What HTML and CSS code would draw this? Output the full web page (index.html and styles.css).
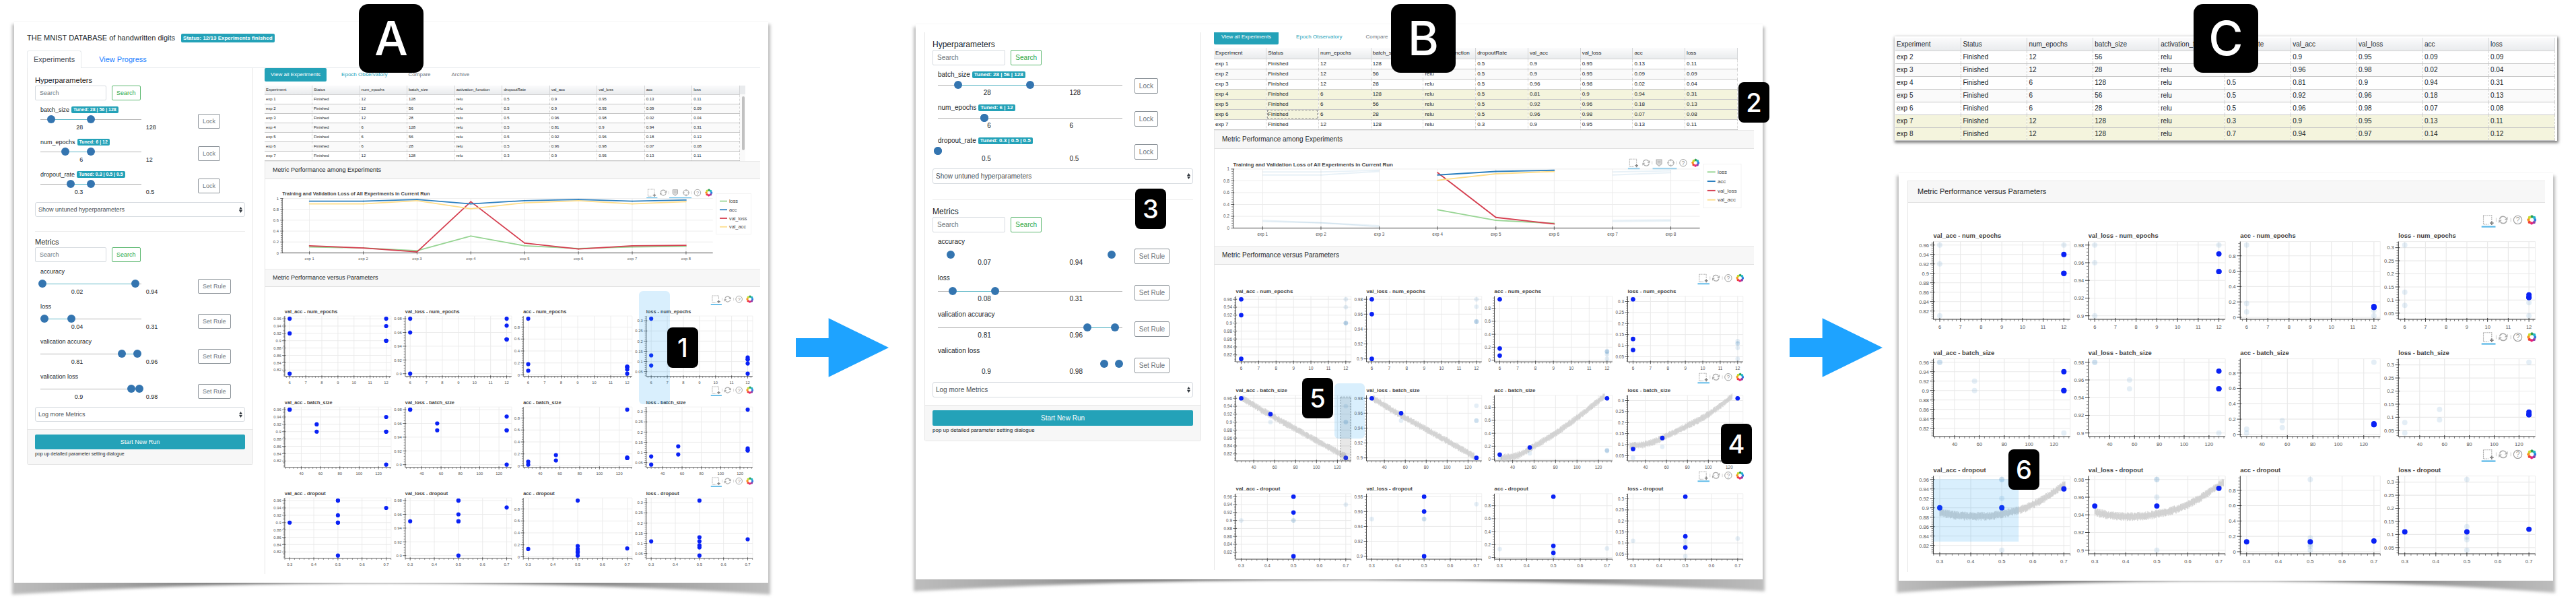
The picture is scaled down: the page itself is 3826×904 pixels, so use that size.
FILE: index.html
```html
<!DOCTYPE html>
<html lang="en">
<head>
<meta charset="utf-8">
<title>MNIST experiment dashboard</title>
<link rel="stylesheet" href="styles.css">
</head>
<body>
<main class="figure">

  <section class="panel panel-a">
    <svg class="shadow" viewBox="0 0 100 100" preserveAspectRatio="none" aria-hidden="true">
      <defs>
        <linearGradient id="lift" x1="0" x2="1" y1="0" y2="0">
          <stop offset="0" stop-color="#bdbdbd"/><stop offset="0.15" stop-color="#a0a0a0"/>
          <stop offset="0.4" stop-color="#4a4a4a"/><stop offset="0.6" stop-color="#4a4a4a"/>
          <stop offset="0.85" stop-color="#a0a0a0"/><stop offset="1" stop-color="#bdbdbd"/>
        </linearGradient>
      </defs>
      <path d="M0 0H100V100Q50 95.8 0 100Z" fill="url(#lift)"/>
    </svg>
    <div class="sheet">
      <header class="title-row">
        <h1 class="title">THE MNIST DATABASE of handwritten digits</h1>
        <span class="badge badge-status">Status: 12/13 Experiments finished</span>
      </header>
      <nav class="page-tabs">
        <a class="page-tab page-tab-active" href="#experiments">Experiments</a>
        <a class="page-tab" href="#progress">View Progress</a>
      </nav>
      <div class="columns">
        <aside class="sidebar" data-sidebar="a"></aside>
        <div class="content">
          <nav class="view-tabs">
            <button class="view-tab view-tab-active" type="button">View all Experiments</button>
            <button class="view-tab view-tab-link" type="button">Epoch Observatory</button>
            <button class="view-tab" type="button">Compare</button>
            <button class="view-tab" type="button">Archive</button>
          </nav>
          <div class="table-wrap">
            <table class="runs" data-rows="1,2,3,4,5,6,7"></table>
            <div class="scrollbar"><div class="scroll-thumb"></div></div>
          </div>
          <section class="card">
            <h2 class="card-title">Metric Performance among Experiments</h2>
            <div class="card-body"><div data-lines=""></div></div>
          </section>
          <section class="card">
            <h2 class="card-title">Metric Performance versus Parameters</h2>
            <div class="card-body card-body-grid"><div data-scatter=""></div></div>
          </section>
        </div>
      </div>
    </div>
    <div class="region region-a"></div>
    <div class="mark mark-large mark-a">A</div>
    <div class="mark mark-1">1</div>
  </section>

  <svg class="arrow" viewBox="0 0 139 88" aria-hidden="true"><path d="M0 30H49V0L139 44L49 88V58H0Z"/></svg>

  <section class="panel panel-b">
    <svg class="shadow" viewBox="0 0 100 100" preserveAspectRatio="none" aria-hidden="true">
      <path d="M0 0H100V100Q50 95.8 0 100Z" fill="url(#lift)"/>
    </svg>
    <div class="sheet">
      <div class="columns">
        <aside class="sidebar" data-sidebar="b"></aside>
        <div class="content">
          <nav class="view-tabs">
            <button class="view-tab view-tab-active" type="button">View all Experiments</button>
            <button class="view-tab view-tab-link" type="button">Epoch Observatory</button>
            <button class="view-tab" type="button">Compare</button>
          </nav>
          <div class="table-wrap">
            <table class="runs" data-rows="1,2,3,4,5,6,7" data-picked="4,5,6" data-focus="6"></table>
          </div>
          <section class="card">
            <h2 class="card-title">Metric Performance among Experiments</h2>
            <div class="card-body"><div data-lines="4,5,6"></div></div>
          </section>
          <section class="card">
            <h2 class="card-title">Metric Performance versus Parameters</h2>
            <div class="card-body card-body-grid"><div data-scatter="4,5,6" data-fit="batch"></div></div>
          </section>
        </div>
      </div>
    </div>
    <div class="region region-b"></div>
    <div class="mark mark-large mark-b">B</div>
    <div class="mark mark-2">2</div>
    <div class="mark mark-3">3</div>
    <div class="mark mark-4">4</div>
    <div class="mark mark-5">5</div>
  </section>

  <svg class="arrow arrow-late" viewBox="0 0 139 88" aria-hidden="true"><path d="M0 30H49V0L139 44L49 88V58H0Z"/></svg>

  <div class="panel-stack">
    <div class="table-sheet">
      <table class="runs" data-rows="2,3,4,5,6,7,8" data-picked="7,8"></table>
    </div>
    <section class="panel panel-c">
      <svg class="shadow" viewBox="0 0 100 100" preserveAspectRatio="none" aria-hidden="true">
        <path d="M0 0H100V100Q50 94 0 100Z" fill="url(#lift)"/>
      </svg>
      <div class="sheet">
        <section class="card">
          <h2 class="card-title">Metric Performance versus Parameters</h2>
          <div class="card-body card-body-grid"><div data-scatter="1,7,8" data-fit="dropout"></div></div>
        </section>
      </div>
      <div class="mark mark-6">6</div>
    </section>
    <div class="mark mark-large mark-c">C</div>
  </div>

</main>
<script src="app.js"></script>
</body>
</html>
```
FILE: styles.css
```css
* { box-sizing: border-box; }

body {
  margin: 0;
  min-height: 100vh;
  background: #fff;
  color: #212529;
  font-family: "Liberation Sans", Arial, sans-serif;
}

button, input, select { font-family: inherit; margin: 0; }

.figure {
  display: grid;
  grid-template-columns: 1120fr 219fr 1258fr 196fr 984fr;
  align-items: start;
  padding: 0 28px 30px 21px;
}

/* Sheets and their lifted shadows */
.panel { position: relative; isolation: isolate; min-width: 0; }
.sheet { position: relative; background: #fff; border-top: 1px solid #f6f6f6; }
.shadow {
  position: absolute;
  left: -3px;
  top: 5px;
  width: calc(100% + 6px);
  height: calc(100% + 13px);
  filter: blur(2px);
}

.panel-a {
  --text: 9px; --heading: 11px; --card-title: 9px; --small: 7px; --badge: 7px; --tab: 8px; --cell: 6px;
  --field: 22px; --row: 48px; --metric-row: 52px; --line: 12px;
  --track: 64%; --first: 27%; --second: 40%;
  margin-top: 31px;
}
.panel-a .sheet { padding: 15px 12px 13px 19px; }
.panel-a .columns { grid-template-columns: minmax(0, 336fr) minmax(0, 736fr); gap: 17px; }

.panel-b {
  --text: 10px; --heading: 12px; --card-title: 10px; --small: 8px; --badge: 8px; --tab: 8px; --cell: 8px;
  --field: 23px; --row: 49px; --metric-row: 54px; --line: 14px;
  --track: 94%; --first: 27%; --second: 40%;
  margin-top: 35px;
}
.panel-b .sheet { padding: 12px 13px 14px; }
.panel-b .columns { grid-template-columns: minmax(0, 411fr) minmax(0, 802fr); gap: 19px; }

.panel-stack { position: relative; --cell: 10px; --card-title: 11px; padding-top: 54px; }
.panel-c { margin: 47px 6px 0; }
.panel-c .sheet { padding: 11px 12px 13px 13px; }

.arrow { width: 138px; height: 88px; margin-top: 472px; justify-self: center; }
.arrow-late { justify-self: end; margin-right: 18px; }
.arrow path { fill: #1ea3ff; }

/* Page head */
.title-row { display: flex; align-items: center; gap: 9px; height: 18px; }
.title { margin: 0; font-size: 11px; font-weight: 400; }
.badge {
  background: #24a2b8;
  color: #fff;
  font-weight: 700;
  font-size: var(--badge);
  line-height: 10px;
  padding: 0 3px;
  border-radius: 2px;
  white-space: nowrap;
}
.badge-status { font-size: 8px; line-height: 13px; }
.page-tabs { display: flex; gap: 16px; margin-top: 10px; border-bottom: 1px solid #e9ecef; }
.page-tab {
  font-size: 11px;
  line-height: 24px;
  padding: 0 9px;
  color: #1a7dff;
  text-decoration: none;
  border: 1px solid transparent;
  border-bottom: 0;
}
.page-tab-active {
  color: #495057;
  background: #fff;
  border-color: #e6e9ec;
  border-radius: 3px 3px 0 0;
  margin-bottom: -1px;
}
.columns { display: grid; align-items: start; }

/* Sidebar */
.sidebar { border: 1px solid #e6e6e6; border-top: 0; border-radius: 0 0 3px 3px; }
.side-body { padding: 10px 11px 11px; }
.side-title { margin: 0; font-size: var(--heading); font-weight: 400; line-height: 16px; }
.search { display: flex; gap: 8px; margin-bottom: 8px; }
.panel-b .search { margin-bottom: 7px; }
.field, .button, .select {
  height: var(--field);
  font-size: var(--text);
  border-radius: 2px;
  background: #fff;
}
.field { width: 34%; border: 1px solid #d6dbe0; padding: 0 6px; color: #495057; }
.panel-b .field { width: 28%; }
.field::placeholder { color: #6c757d; opacity: 1; }
.button { border: 1px solid #8d949a; color: #6c757d; padding: 0 6px; white-space: nowrap; }
.button-search { border-color: #5cb870; color: #28a745; }
.param { display: flex; align-items: flex-start; height: var(--row); padding-left: 8px; }
.param-metric { height: var(--metric-row); }
.param-main { flex: 0 0 77%; }
.param-label { display: flex; align-items: center; gap: 3px; height: var(--line); font-size: var(--text); line-height: var(--line); }
.param .button { margin-top: 12px; }
.param-metric .button { margin-top: 17px; }
.slider { display: grid; align-items: center; position: relative; width: var(--track); height: 12px; margin-top: 2px; }
.param-metric .slider { margin-top: 6px; }
.slider > * { grid-area: 1 / 1; }
.slider-track { height: 1px; background: #b4b4b4; }
.slider-fill {
  height: 1px;
  background: #5bb5c5;
  margin-left: calc(var(--lo) * 1%);
  width: calc((var(--hi) - var(--lo)) * 1%);
}
.slider input {
  appearance: none;
  background: none;
  width: calc(100% + 12px);
  height: 12px;
  margin: 0 -6px;
  pointer-events: none;
}
.slider input::-webkit-slider-thumb {
  appearance: none;
  width: 12px;
  height: 12px;
  border: 0;
  border-radius: 50%;
  background: #3475b0;
  pointer-events: auto;
}
.values { display: flex; font-size: var(--text); line-height: 12px; }
.value-first { width: var(--first); text-align: right; }
.value-second { margin-left: var(--second); }
.select-wrap { position: relative; margin-top: -1px; }
.select {
  display: block;
  width: 100%;
  appearance: none;
  border: 1px solid #d6dbe0;
  border-radius: 3px;
  padding: 0 4px;
  color: #495057;
}
.select-arrows { position: absolute; right: 4px; top: 7px; width: 5px; height: 9px; fill: #343a40; }
.rule { border: 0; border-top: 1px solid #ececec; margin: 21px 0 7px; }
.panel-b .rule { margin: 23px 0 9px; }
.side-foot { background: #f7f7f7; border-top: 1px solid #e6e6e6; padding: 7px 11px 8px; }
.run {
  display: block;
  width: 100%;
  height: var(--field);
  border: 0;
  border-radius: 2px;
  background: #24a2b8;
  color: #fff;
  font-size: var(--text);
}
.hint { margin: 0; font-size: var(--small); line-height: 14px; }

/* Views */
.view-tabs { display: flex; gap: 13px; margin-bottom: 6px; }
.view-tab {
  border: 0;
  border-radius: 2px;
  background: none;
  color: #6c757d;
  font-size: var(--tab);
  line-height: 20px;
  height: 20px;
  padding: 0 9px;
}
.view-tab-link { color: #24a2b8; }
.view-tab-active { background: #24a2b8; color: #fff; }
.panel-b .view-tabs { height: 18px; gap: 17px; align-items: flex-end; margin-bottom: 5px; }
.panel-b .view-tab { height: 18px; line-height: 14px; padding-bottom: 4px; }
.panel-b .view-tab-active { border-radius: 0 0 2px 2px; padding-left: 11px; padding-right: 11px; }

/* Runs table */
.table-wrap { display: flex; width: 97%; }
.runs { flex: 1; width: 100%; border-collapse: collapse; table-layout: fixed; font-size: var(--cell); }
.runs th, .runs td { text-align: left; padding: 0 2px; font-weight: 400; overflow: hidden; white-space: nowrap; }
.runs th { height: 13px; background: linear-gradient(#fbfbfc, #e9ebed); border-right: 1px solid #d4d6d8; border-bottom: 1px solid #d0d0d0; }
.runs td { height: 14px; border-right: 1px dotted #cfcfcf; border-bottom: 1px solid #c6c6c6; }
.runs tr:nth-child(even) td { background: #fafafa; }
.runs tr.picked td { background: #f4f4dd; }
.runs td.focus { outline: 1px dashed #999; outline-offset: -2px; }
.scrollbar { width: 8px; padding: 16px 1px 0 3px; background: linear-gradient(#e9ebed 13px, #fafafa 13px); }
.scroll-thumb { width: 4px; height: 80px; border-radius: 2px; background: #c1c1c1; }
.panel-b .runs th { height: 16px; }
.panel-b .runs td { height: 15px; }
.table-sheet {
  padding: 2px 3px 1px 1px;
  background: #fff;
  box-shadow: 1px 2px 4px 1px rgba(0, 0, 0, 0.5);
  height: 155px;
}
.table-sheet .runs th { height: 19px; }
.table-sheet .runs td { height: 19px; border-right-style: dashed; }

/* Cards */
.card { border-left: 1px solid #e6e6e6; }
.card-title {
  margin: 0;
  padding: 0 11px;
  background: #f7f7f7;
  border-top: 1px solid #e9e9e9;
  border-bottom: 1px solid #e0e0e0;
  font-size: var(--card-title);
  line-height: 26px;
  font-weight: 400;
}
.panel-a .card-title { line-height: 25px; }
.panel-a .card-body { padding: 12px 10px 11px 9px; }
.panel-a .card-body-grid { padding: 10px 10px 10px 9px; }
.panel-b .card-body { padding: 12px 15px 13px 10px; }
.panel-b .card-body-grid { padding: 11px 15px 2px 10px; }
.panel-c .card-title { line-height: 31px; padding: 0 14px; }
.panel-c .card-body-grid { padding: 15px 13px 11px 12px; }
.chart { display: block; width: 100%; height: auto; }
.chart text { font-size: 8px; fill: #555; }
.chart .chart-title { font-size: 10px; font-weight: 700; fill: #444; }
.chart .legend-text { font-size: 10px; fill: #444; }
.chart .tool-text { font-size: 11px; fill: #999; }

/* Call-outs lying over the sheets */
.mark {
  position: absolute;
  display: grid;
  place-items: center;
  width: 46px;
  height: 60px;
  border-radius: 8px;
  background: #000;
  color: #fff;
  font: 500 38px/60px Inter, "Liberation Sans", sans-serif;
}
.mark-large { width: 96px; height: 102px; border-radius: 14px; font-size: 70px; line-height: 102px; }
.mark-a { left: 512px; top: -25px; }
.mark-b { left: 706px; top: -29px; }
.mark-c { left: 444px; top: 6px; }
.mark-1 { left: 970px; top: 455px; }
.mark-2 { left: 1222px; top: 87px; }
.mark-3 { left: 326px; top: 245px; }
.mark-4 { left: 1196px; top: 594px; }
.mark-5 { left: 574px; top: 526px; }
.mark-6 { left: 163px; top: 411px; }
.region { position: absolute; border-radius: 6px; background: rgba(30, 160, 245, 0.17); }
.region-a { left: 928px; top: 401px; width: 46px; height: 168px; }
.region-b { left: 622px; top: 534px; width: 45px; height: 82px; }
```
FILE: app.js
```js
const RUNS = [
  { id: 1, epochs: 12, batch: 128, dropout: 0.5, val_acc: 0.9, val_loss: 0.95, acc: 0.13, loss: 0.11 },
  { id: 2, epochs: 12, batch: 56, dropout: 0.5, val_acc: 0.9, val_loss: 0.95, acc: 0.09, loss: 0.09 },
  { id: 3, epochs: 12, batch: 28, dropout: 0.5, val_acc: 0.96, val_loss: 0.98, acc: 0.02, loss: 0.04 },
  { id: 4, epochs: 6, batch: 128, dropout: 0.5, val_acc: 0.81, val_loss: 0.9, acc: 0.94, loss: 0.31 },
  { id: 5, epochs: 6, batch: 56, dropout: 0.5, val_acc: 0.92, val_loss: 0.96, acc: 0.18, loss: 0.13 },
  { id: 6, epochs: 6, batch: 28, dropout: 0.5, val_acc: 0.96, val_loss: 0.98, acc: 0.07, loss: 0.08 },
  { id: 7, epochs: 12, batch: 128, dropout: 0.3, val_acc: 0.9, val_loss: 0.95, acc: 0.13, loss: 0.11 },
  { id: 8, epochs: 12, batch: 128, dropout: 0.7, val_acc: 0.94, val_loss: 0.97, acc: 0.14, loss: 0.12 }
];

const ids = (text) => (text ? text.split(',').map(Number) : []);

/* ---------- Sidebar ---------- */

const SIDEBARS = {
  a: {
    params: [
      ['batch_size', 'Tuned: 28 | 56 | 128', 11, 50, '28', '128', true],
      ['num_epochs', 'Tuned: 6 | 12', 25, 50, '6', '12', true],
      ['dropout_rate', 'Tuned: 0.3 | 0.5 | 0.5', 30, 50, '0.3', '0.5', true]
    ],
    metrics: [
      ['accuracy', '', 2, 94, '0.02', '0.94', true],
      ['loss', '', 4, 31, '0.04', '0.31', true],
      ['valication accuracy', '', 81, 96, '0.81', '0.96', true],
      ['valication loss', '', 90, 98, '0.9', '0.98', true]
    ]
  },
  b: {
    params: [
      ['batch_size', 'Tuned: 28 | 56 | 128', 11, 50, '28', '128', true],
      ['num_epochs', 'Tuned: 6 | 12', 25, 25, '6', '6', true],
      ['dropout_rate', 'Tuned: 0.3 | 0.5 | 0.5', 0, 0, '0.5', '0.5', false]
    ],
    metrics: [
      ['accuracy', '', 7, 94, '0.07', '0.94', false],
      ['loss', '', 8, 31, '0.08', '0.31', true],
      ['valication accuracy', '', 81, 96, '0.81', '0.96', true],
      ['valication loss', '', 90, 98, '0.9', '0.98', false]
    ]
  }
};

function paramRow([name, tuned, lo, hi, first, second, track], metric) {
  const badge = tuned ? `<span class="badge">${tuned}</span>` : '';
  const rail = track
    ? `<div class="slider-track"></div><div class="slider-fill" style="--lo:${lo};--hi:${hi}"></div>`
    : '';
  return `<div class="param${metric ? ' param-metric' : ''}">
    <div class="param-main">
      <div class="param-label"><span>${name}</span>${badge}</div>
      <div class="slider">${rail}
        <input type="range" aria-label="${name} minimum" value="${lo}">
        <input type="range" aria-label="${name} maximum" value="${hi}">
      </div>
      <div class="values"><span class="value-first">${first}</span><span class="value-second">${second}</span></div>
    </div>
    <button class="button" type="button">${metric ? 'Set Rule' : 'Lock'}</button>
  </div>`;
}

const searchRow = (label) => `<div class="search">
  <input class="field" type="search" placeholder="Search" aria-label="${label}">
  <button class="button button-search" type="button">Search</button></div>`;

const selectRow = (label) => `<div class="select-wrap">
  <select class="select" aria-label="${label}"><option>${label}</option></select>
  <svg class="select-arrows" viewBox="0 0 5 9"><path d="M0 4L2.5 0L5 4ZM0 5L2.5 9L5 5Z"/></svg></div>`;

document.querySelectorAll('[data-sidebar]').forEach((el) => {
  const set = SIDEBARS[el.dataset.sidebar];
  el.innerHTML = `<div class="side-body">
    <h2 class="side-title">Hyperparameters</h2>
    ${searchRow('Search hyperparameters')}
    ${set.params.map((p) => paramRow(p, false)).join('')}
    ${selectRow('Show untuned hyperparameters')}
    <hr class="rule">
    <h2 class="side-title">Metrics</h2>
    ${searchRow('Search metrics')}
    ${set.metrics.map((p) => paramRow(p, true)).join('')}
    ${selectRow('Log more Metrics')}
  </div>
  <div class="side-foot">
    <button class="run" type="button">Start New Run</button>
    <p class="hint">pop up detailed parameter setting dialogue</p>
  </div>`;
});

/* ---------- Tables ---------- */

const HEADS = ['Experiment', 'Status', 'num_epochs', 'batch_size', 'activation_function',
  'dropoutRate', 'val_acc', 'val_loss', 'acc', 'loss'];

document.querySelectorAll('.runs').forEach((table) => {
  const picked = ids(table.dataset.picked);
  const focus = Number(table.dataset.focus);
  const body = ids(table.dataset.rows).map((id) => {
    const r = RUNS[id - 1];
    const cells = [`exp ${id}`, 'Finished', r.epochs, r.batch, 'relu', r.dropout, r.val_acc, r.val_loss, r.acc, r.loss];
    return `<tr class="${picked.includes(id) ? 'picked' : ''}">${cells
      .map((c, i) => `<td${id === focus && i === 1 ? ' class="focus"' : ''}>${c}</td>`).join('')}</tr>`;
  });
  table.innerHTML = `<thead><tr>${HEADS.map((h) => `<th scope="col">${h}</th>`).join('')}</tr></thead><tbody>${body.join('')}</tbody>`;
});

/* ---------- Chart parts ---------- */

const text = (x, y, s, anchor = 'middle', cls = '') =>
  `<text x="${x}" y="${y}" text-anchor="${anchor}" class="${cls}">${s}</text>`;
const path = (d, stroke, width = 1, extra = '') =>
  `<path d="${d}" fill="none" stroke="${stroke}" stroke-width="${width}" ${extra}/>`;

const boxSelect = (x) => path(`M${x - 7} 4h13v8M${x - 7} 4v14h8`, '#aaa', 1.2, 'stroke-dasharray="2 1"') +
  path(`M${x + 6} 13v6M${x + 3} 16h6`, '#888', 2);
const reset = (x) => path(`M${x - 5.5} 10A5.5 5.5 0 0 1 ${x + 4.5} 8M${x + 5.5} 12A5.5 5.5 0 0 1 ${x - 4.5} 14`, '#aaa', 1.6) +
  `<path d="M${x + 7} 6v5h-5ZM${x - 7} 16v-5h5Z" fill="#aaa"/>`;
const hover = (x) => `<path d="M${x - 5} 5h10v8l-5 4l-5 -4Z" fill="#ddd" stroke="#aaa" stroke-width="1.3"/>` +
  path(`M${x - 3} 8h6M${x - 3} 11h6`, '#aaa', 1);
const cross = (x) => `<circle cx="${x}" cy="11" r="5.5" fill="none" stroke="#aaa" stroke-width="1.4"/>` +
  path(`M${x} 4v4M${x} 14v4M${x - 7} 11h4M${x + 3} 11h4`, '#aaa', 1.4);
const help = (x) => `<circle cx="${x}" cy="11" r="6.5" fill="none" stroke="#999" stroke-width="1.2"/>` +
  text(x, 15, '?', 'middle', 'tool-text');
const sep = (x) => path(`M${x} 8v6`, '#ccc', 1);
const underline = (x, w) => `<rect x="${x}" y="20.5" width="${w}" height="2.4" fill="#5bb9e8"/>`;

function bokeh(x) {
  const hues = ['#2a9d57', '#1eb6c8', '#2b7de0', '#8a3fa8', '#e5217b', '#ee4036', '#f7941e', '#c6d92d'];
  return hues.map((c, i) => {
    const a = (i * 45 - 112) * Math.PI / 180;
    const b = a + 48 * Math.PI / 180;
    const p = (t, r) => `${(x + r * Math.cos(t)).toFixed(2)} ${(11 + r * Math.sin(t)).toFixed(2)}`;
    return `<path d="M${p(a, 3.4)}L${p(a, 6.5)}L${p((a + b) / 2, 7.8)}L${p(b, 6.5)}L${p(b, 3.4)}Z" fill="${c}"/>`;
  }).join('');
}

/* Major ticks with five minor steps between them. */
function ticks(min, max, step, map, draw) {
  let out = '';
  const minor = step / 5;
  for (let k = Math.ceil(min / minor - 1e-6); k * minor <= max + 1e-9; k++) {
    out += draw(map(k * minor), k % 5 === 0, Number((k * minor).toFixed(3)));
  }
  return out;
}

/* ---------- Scatter grid ---------- */

const XS = [
  { key: 'epochs', label: 'num_epochs', min: 6, max: 12, step: 1 },
  { key: 'batch', label: 'batch_size', min: 28, max: 128, step: 20 },
  { key: 'dropout', label: 'dropout', min: 0.3, max: 0.7, step: 0.1 }
];
const YS = [
  { key: 'val_acc', min: 0.81, max: 0.96, step: 0.02, left: 27, width: 215 },
  { key: 'val_loss', min: 0.9, max: 0.98, step: 0.02, left: 27, width: 215 },
  { key: 'acc', min: 0.02, max: 0.94, step: 0.2, left: 22, width: 220 },
  { key: 'loss', min: 0.04, max: 0.31, step: 0.05, left: 27, width: 215 }
];
const FITS = {
  batch: [
    [[29, 0.96], [56, 0.918], [92, 0.865], [128, 0.813]],
    [[29, 0.98], [56, 0.957], [92, 0.929], [126, 0.902]],
    [[29, 0.02], [45, 0.06], [56, 0.16], [80, 0.4], [102.6, 0.67], [126, 0.98]],
    [[25, 0.096], [33.5, 0.097], [44.3, 0.107], [56, 0.13], [78, 0.181], [100, 0.237], [123, 0.32]]
  ],
  dropout: [
    [[0.3, 0.89], [0.352, 0.884], [0.402, 0.882], [0.467, 0.883], [0.5, 0.887], [0.565, 0.897], [0.63, 0.917], [0.705, 0.951]],
    [[0.3, 0.943], [0.352, 0.9394], [0.402, 0.938], [0.467, 0.939], [0.5, 0.941], [0.565, 0.9466], [0.63, 0.957], [0.715, 0.977]]
  ]
};

let seed = 7;
const rand = () => ((seed = (seed * 16807) % 2147483647) / 2147483647);

/* A fitted curve drawn as a fuzzy grey band. */
function band(points, sx, sy) {
  const p = points.map(([x, y]) => [sx(x), sy(y)]);
  const slope = (i) => {
    const a = p[Math.max(0, i - 1)];
    const b = p[Math.min(p.length - 1, i + 1)];
    return (b[1] - a[1]) / (b[0] - a[0]);
  };
  let d = '';
  for (let i = 0; i < p.length - 1; i++) {
    const h = p[i + 1][0] - p[i][0];
    for (let x = p[i][0]; x < p[i + 1][0]; x += 0.6) {
      const t = (x - p[i][0]) / h;
      const t2 = t * t;
      const t3 = t2 * t;
      const y = (2 * t3 - 3 * t2 + 1) * p[i][1] + (t3 - 2 * t2 + t) * h * slope(i) +
        (3 * t2 - 2 * t3) * p[i + 1][1] + (t3 - t2) * h * slope(i + 1);
      d += `M${x.toFixed(1)} ${(y - 3 - rand() * 4).toFixed(1)}V${(y + 3 + rand() * 4).toFixed(1)}`;
    }
  }
  return path(d, '#cbcbcb', 0.8);
}

function plot(col, X, Y, picked, fit) {
  const top = 45;
  const height = 122;
  const left = col * 243.5 + Y.left;
  const right = left + Y.width;
  const bottom = top + height;
  const sx = (v) => left + 10 + (v - X.min) / (X.max - X.min) * (Y.width - 20);
  const sy = (v) => bottom - 5.5 - (v - Y.min) / (Y.max - Y.min) * (height - 11);
  const padX = (X.max - X.min) * 10 / (Y.width - 20);
  const padY = (Y.max - Y.min) * 5.5 / (height - 11);
  let grid = '';
  let axis = '';
  ticks(X.min - padX, X.max + padX, X.step, sx, (x, major, v) => {
    if (major) {
      grid += `M${x} ${top}V${bottom}`;
      axis += path(`M${x} ${bottom - 2}v6`, '#333') + text(x, 182, v);
    } else axis += path(`M${x} ${bottom}v3`, '#555', 0.8);
    return '';
  });
  ticks(Y.min - padY, Y.max + padY, Y.step, sy, (y, major, v) => {
    if (major) {
      grid += `M${left} ${y}H${right}`;
      axis += path(`M${left - 5} ${y}h7`, '#333') + text(left - 7, y + 3, v, 'end');
    } else axis += path(`M${left - 3} ${y}h3`, '#555', 0.8);
    return '';
  });
  const dots = RUNS.map((r) => {
    const on = !picked.length || picked.includes(r.id);
    return [on, `<circle cx="${sx(r[X.key])}" cy="${sy(r[Y.key])}" r="4.2" fill="${on ? '#0a22f5' : '#1f77b4'}" opacity="${on ? 1 : 0.12}"/>`];
  }).sort((a, b) => a[0] - b[0]).map((d) => d[1]).join('');
  return text(left, 39.5, `${Y.key} - ${X.label}`, 'start', 'chart-title') +
    path(grid, '#e9e9e9', 1.2) +
    path(`M${left} ${top}H${right}V${bottom}`, '#ececec') +
    path(`M${left} ${top}V${bottom}H${right}`, '#333', 1.1) + axis +
    (fit ? band(fit, sx, sy) : '') + dots;
}

document.querySelectorAll('[data-scatter]').forEach((el) => {
  const picked = ids(el.dataset.scatter);
  const fit = el.dataset.fit;
  el.innerHTML = XS.map((X) => {
    const fits = fit === X.key ? FITS[fit] : [];
    let over = '';
    if (fit === 'batch' && X.key === 'batch') {
      over = '<rect x="222.5" y="48" width="18.5" height="118" fill="#888" fill-opacity="0.2" stroke="#777" stroke-dasharray="3 2"/>';
    }
    if (fit === 'dropout' && X.key === 'dropout') {
      over = '<rect x="27" y="50" width="134" height="98" fill="#1ea0f5" fill-opacity="0.17"/>';
    }
    return `<svg class="chart" viewBox="0 0 974 184" role="img" aria-label="Metrics by ${X.label}">
      ${boxSelect(898)}${sep(911)}${reset(922)}${sep(934)}${help(945)}${bokeh(967)}${underline(888, 22)}
      ${YS.map((Y, i) => plot(i, X, Y, picked, fits[i])).join('')}${over}</svg>`;
  }).join('');
});

/* ---------- Line chart ---------- */

const SERIES = [
  ['loss', 'loss', '#98d594'],
  ['acc', 'val_loss', '#2b7fbf'],
  ['val_loss', 'acc', '#d53e4f'],
  ['val_acc', 'val_acc', '#fedd89']
];

document.querySelectorAll('[data-lines]').forEach((el) => {
  const picked = ids(el.dataset.lines);
  const sx = (id) => 77 + (id - 1) * 108.7;
  const sy = (v) => 132.5 - v * 110;
  let out = '';
  RUNS.forEach((r) => {
    out += path(`M${sx(r.id)} 22.5V132.5`, '#ebebeb', 1.2) +
      path(`M${sx(r.id)} 129.5v6`, '#333') + text(sx(r.id), 147, `exp ${r.id}`);
  });
  ticks(0, 1, 0.2, sy, (y, major, v) => {
    out += major
      ? path(`M22 ${y}H892`, '#ebebeb', 1.2) + path(`M18 ${y}h6`, '#333') + text(15, y + 3, v, 'end')
      : path(`M19 ${y}h3`, '#555', 0.9);
    return '';
  });
  out += path('M22 22.5V132.5H892', '#333', 1.2);
  const order = [SERIES[0], SERIES[2], SERIES[3], SERIES[1]];
  order.forEach(([, key, color]) => {
    for (let i = 0; i < RUNS.length - 1; i++) {
      const a = RUNS[i];
      const b = RUNS[i + 1];
      const on = (r) => !picked.length || picked.includes(r.id);
      if (on(a) !== on(b)) continue;
      out += path(`M${sx(a.id)} ${sy(a[key])}L${sx(b.id)} ${sy(b[key])}`,
        on(a) ? color : '#1f77b4', 2.4, on(a) ? 'stroke-linecap="round"' : 'opacity="0.1"');
    }
  });
  out += '<rect x="899" y="13" width="70" height="82" fill="#fff" stroke="#efefef"/>';
  SERIES.forEach(([name, , color], i) => {
    const y = 28 + i * 17.3;
    out += path(`M906 ${y}h15`, color, 2.4) + text(925, y + 3.5, name, 'start', 'legend-text');
  });
  el.innerHTML = `<svg class="chart" viewBox="0 0 974 150" role="img" aria-label="Training and validation loss">
    ${text(22, 17, 'Training and Validation Loss of All Experiments in Current Run', 'start', 'chart-title')}
    ${boxSelect(768)}${reset(792)}${sep(803)}${hover(816)}${cross(838)}${sep(849)}${help(861)}${bokeh(884)}
    ${underline(758, 22)}${underline(804, 45)}${out}</svg>`;
});
```
